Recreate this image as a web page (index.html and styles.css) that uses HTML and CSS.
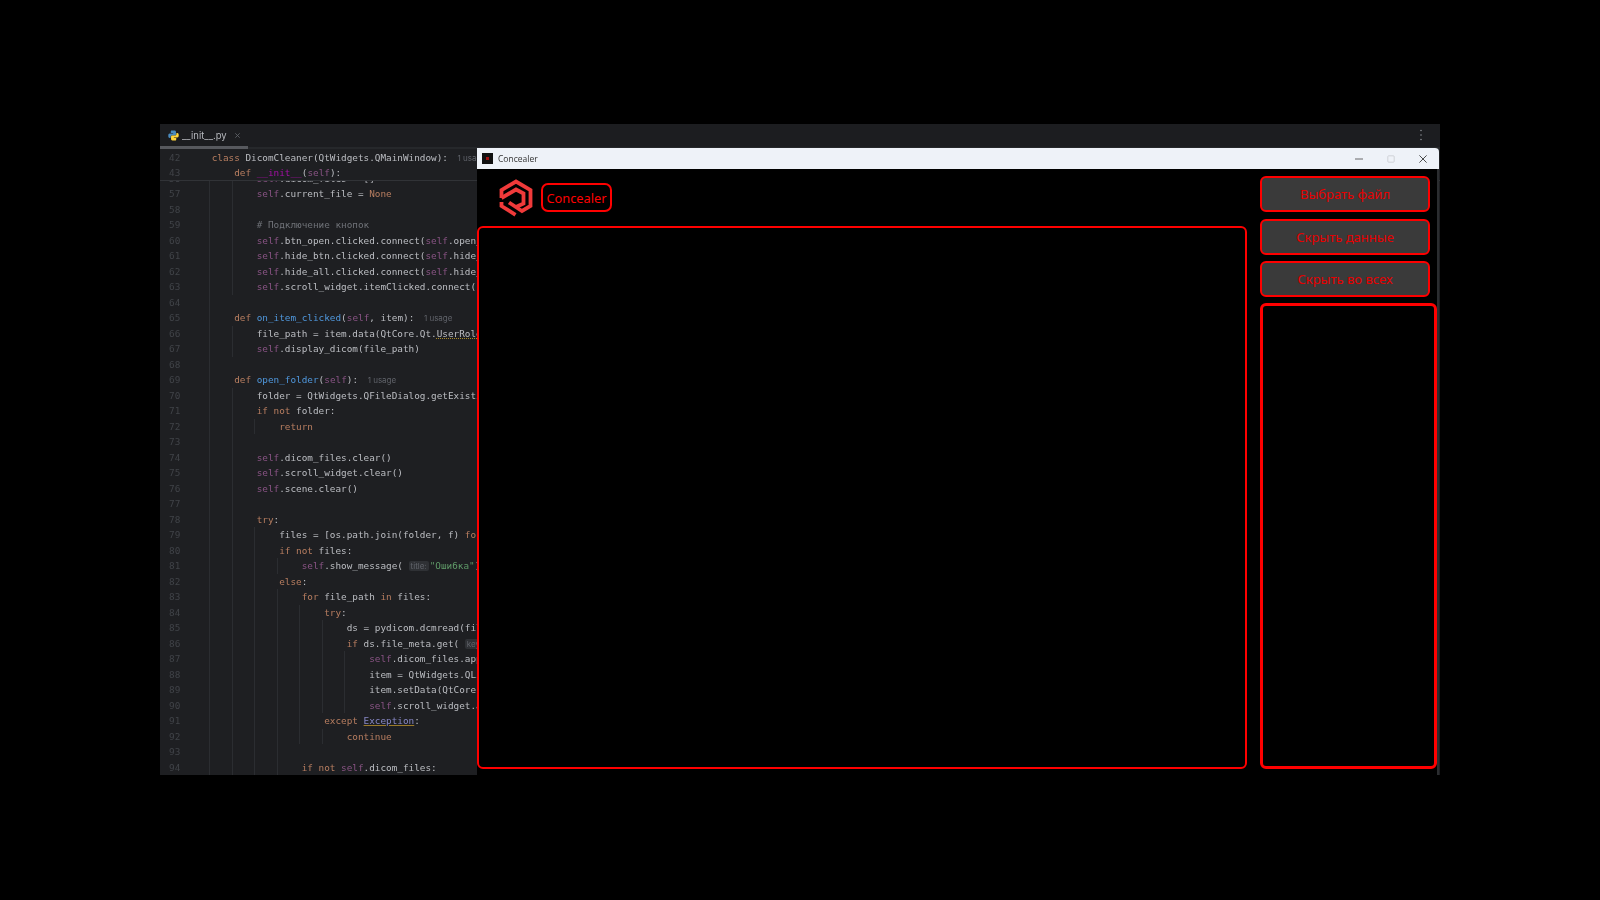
FILE: index.html
```html
<!DOCTYPE html>
<html lang="ru">
<head>
<meta charset="utf-8">
<title>Concealer</title>
<link rel="stylesheet" href="styles.css">
</head>
<body>
<div class="desktop">
  <section class="ide">
    <header class="tabbar">
      <div class="tab">
        <svg class="py" viewBox="0 0 12 12"><path fill="#4b8bbe" d="M4 .6h3.2c.9 0 1.500.6 1.500 1.500v2.400c0 .8-.6 1.400-1.400 1.400H4.500c-1 0-1.700.7-1.700 1.700v1H1.800C.9 8.600.3 7.800.3 6.200s.6-2.400 1.500-2.400h3.800v-.5H3V2C3 1.100 3.300.6 4 .6z"/><path fill="#ffd43b" d="M8 11.400H4.800c-.9 0-1.500-.6-1.500-1.500V7.500c0-.8.6-1.400 1.400-1.400h2.800c1 0 1.700-.7 1.700-1.700v-1h1c.9 0 1.500.8 1.500 2.400s-.6 2.400-1.500 2.400H6.400v.5H9V10c0 .9-.3 1.400-1 1.400z"/></svg>
        <span class="tabname">__init__.py</span>
        <svg class="tabx" viewBox="0 0 8 8"><path d="M1.500 1.500l5 5m0-5l-5 5"/></svg>
      </div>
      <svg class="kebab" viewBox="0 0 4 12"><circle cx="2" cy="1.500" r=".8"/><circle cx="2" cy="6" r=".8"/><circle cx="2" cy="10.500" r=".8"/></svg>
    </header>
    <div class="sticky">
      <div class="line"><b>42</b><code><k>class</k> DicomCleaner(QtWidgets.QMainWindow): <u>1 usage</u></code></div>
      <div class="line"><b>43</b><code class="n1"><k>def</k> <d>__init__</d>(<s>self</s>):</code></div>
    </div>
    <div class="codewrap">
      <div class="codescroll">
        <div class="line"><b>56</b><i></i><i></i><code><s>self</s>.dicom_files = []</code></div>
        <div class="line"><b>57</b><i></i><i></i><code><s>self</s>.current_file = <k>None</k></code></div>
        <div class="line"><b>58</b><i></i><i></i></div>
        <div class="line"><b>59</b><i></i><i></i><code><c># Подключение кнопок</c></code></div>
        <div class="line"><b>60</b><i></i><i></i><code><s>self</s>.btn_open.clicked.connect(<s>self</s>.open_folder)</code></div>
        <div class="line"><b>61</b><i></i><i></i><code><s>self</s>.hide_btn.clicked.connect(<s>self</s>.hide_data)</code></div>
        <div class="line"><b>62</b><i></i><i></i><code><s>self</s>.hide_all.clicked.connect(<s>self</s>.hide_all_data)</code></div>
        <div class="line"><b>63</b><i></i><i></i><code><s>self</s>.scroll_widget.itemClicked.connect(<s>self</s>)</code></div>
        <div class="line"><b>64</b><i></i></div>
        <div class="line"><b>65</b><i></i><code><k>def</k> <f>on_item_clicked</f>(<s>self</s>, item): <u>1 usage</u></code></div>
        <div class="line"><b>66</b><i></i><i></i><code>file_path = item.data(QtCore.Qt.<w>UserRole</w>)</code></div>
        <div class="line"><b>67</b><i></i><i></i><code><s>self</s>.display_dicom(file_path)</code></div>
        <div class="line"><b>68</b><i></i></div>
        <div class="line"><b>69</b><i></i><code><k>def</k> <f>open_folder</f>(<s>self</s>): <u>1 usage</u></code></div>
        <div class="line"><b>70</b><i></i><i></i><code>folder = QtWidgets.QFileDialog.getExistingDirectory()</code></div>
        <div class="line"><b>71</b><i></i><i></i><code><k>if not</k> folder:</code></div>
        <div class="line"><b>72</b><i></i><i></i><i></i><code><k>return</k></code></div>
        <div class="line"><b>73</b><i></i><i></i></div>
        <div class="line"><b>74</b><i></i><i></i><code><s>self</s>.dicom_files.clear()</code></div>
        <div class="line"><b>75</b><i></i><i></i><code><s>self</s>.scroll_widget.clear()</code></div>
        <div class="line"><b>76</b><i></i><i></i><code><s>self</s>.scene.clear()</code></div>
        <div class="line"><b>77</b><i></i><i></i></div>
        <div class="line"><b>78</b><i></i><i></i><code><k>try</k>:</code></div>
        <div class="line"><b>79</b><i></i><i></i><i></i><code>files = [os.path.join(folder, f) <k>for</k> f in x]</code></div>
        <div class="line"><b>80</b><i></i><i></i><i></i><code><k>if not</k> files:</code></div>
        <div class="line"><b>81</b><i></i><i></i><i></i><i></i><code><s>self</s>.show_message( <u class="hint">title:</u><g>"Ошибка"</g>)</code></div>
        <div class="line"><b>82</b><i></i><i></i><i></i><code><k>else</k>:</code></div>
        <div class="line"><b>83</b><i></i><i></i><i></i><i></i><code><k>for</k> file_path <k>in</k> files:</code></div>
        <div class="line"><b>84</b><i></i><i></i><i></i><i></i><i></i><code><k>try</k>:</code></div>
        <div class="line"><b>85</b><i></i><i></i><i></i><i></i><i></i><i></i><code>ds = pydicom.dcmread(file_path)</code></div>
        <div class="line"><b>86</b><i></i><i></i><i></i><i></i><i></i><i></i><code><k>if</k> ds.file_meta.get( <u class="hint">key:</u> x)</code></div>
        <div class="line"><b>87</b><i></i><i></i><i></i><i></i><i></i><i></i><i></i><code><s>self</s>.dicom_files.append(x)</code></div>
        <div class="line"><b>88</b><i></i><i></i><i></i><i></i><i></i><i></i><i></i><code>item = QtWidgets.QListWidgetItem()</code></div>
        <div class="line"><b>89</b><i></i><i></i><i></i><i></i><i></i><i></i><i></i><code>item.setData(QtCore.Qt.UserRole)</code></div>
        <div class="line"><b>90</b><i></i><i></i><i></i><i></i><i></i><i></i><i></i><code><s>self</s>.scroll_widget.addItem(item)</code></div>
        <div class="line"><b>91</b><i></i><i></i><i></i><i></i><i></i><code><k>except</k> <e>Exception</e>:</code></div>
        <div class="line"><b>92</b><i></i><i></i><i></i><i></i><i></i><i></i><code><k>continue</k></code></div>
        <div class="line"><b>93</b><i></i><i></i><i></i><i></i></div>
        <div class="line"><b>94</b><i></i><i></i><i></i><i></i><code><k>if not</k> <s>self</s>.dicom_files:</code></div>
      </div>
    </div>
  </section>

  <section class="window">
    <header class="titlebar">
      <span class="appicon"><span class="appdot"></span></span>
      <span class="wintitle">Concealer</span>
      <span class="wincontrols">
        <svg class="wc" viewBox="0 0 10 10"><path d="M0 5h10" stroke="#444"/></svg>
        <svg class="wc" viewBox="0 0 10 10"><rect x="1" y="1" width="8" height="8" rx="1" fill="none" stroke="#c9ccd1"/></svg>
        <svg class="wc" viewBox="0 0 10 10"><path d="M.5.5l9 9m0-9l-9 9" stroke="#333" stroke-width="1.100"/></svg>
      </span>
    </header>
    <div class="winbody">
      <div class="leftcol">
        <div class="brand">
          <svg class="logo" viewBox="0 0 34 38" fill="none" stroke="#f03a3a" stroke-width="3.800" stroke-linejoin="miter">
            <path d="M2.500 19V11L17 2.500L31.500 11V27L23 32L10 23.500"/>
            <path d="M2.500 19L17 10.500L24.500 14.500V24.500L17 28"/>
            <path d="M2.500 23V27L16.500 35.800"/>
          </svg>
          <span class="brandname">Concealer</span>
        </div>
        <div class="viewer"></div>
      </div>
      <div class="rightcol">
        <button class="btn">Выбрать файл</button>
        <button class="btn">Скрыть данные</button>
        <button class="btn">Скрыть во всех</button>
        <div class="filelist"></div>
      </div>
    </div>
  </section>
</div>
</body>
</html>
```
FILE: styles.css
```css
* { box-sizing: border-box; }
html, body { margin: 0; height: 100%; background: #000; overflow: hidden; }
.desktop { position: relative; width: 1600px; height: 900px; padding: 124px 160px 125px; background: #000; }

.ide { height: 651px; background: #1e1f22; display: flex; flex-direction: column; overflow: hidden; }
.tabbar { height: 25px; flex: none; display: flex; align-items: flex-start; justify-content: space-between; background: #1c1d20; border-bottom: 2px solid #26282b; padding-right: 17px; }
.tab { width: 88px; height: 25px; border-bottom: 3px solid #57595e; display: flex; align-items: center; padding: 0 0 0 8px; gap: 3px; }
.py { width: 11px; height: 11px; flex: none; }
.tabname { font: 9.500px "Inter", sans-serif; color: #b4b6bb; filter: blur(.3px); }
.tabx { width: 7px; height: 7px; margin-left: 4px; fill: none; stroke: #5f6267; }
.kebab { width: 4px; height: 12px; margin-top: 5px; fill: #8a8c90; }

.sticky { flex: none; height: 32px; padding-top: .5px; border-bottom: 1px solid #313337; }
.codewrap { flex: 1; overflow: hidden; }
.codescroll { margin-top: -10.350px; }
.line { display: flex; height: 15.500px; font: 9.350px/15.500px "DejaVu Sans Mono", monospace; color: #bcbec3; white-space: pre; filter: blur(.35px); }
.line b { width: 49.300px; flex: none; padding-left: 9px; font-weight: 400; color: #404348; }
.line i { width: 22.500px; flex: none; border-left: 1px solid #2b2d31; }
.line code { font: inherit; padding-left: 2.400px; }
.line code.n1 { padding-left: 24.900px; }
k { color: #b87e60; }
s { color: #8a5485; text-decoration: none; }
f { color: #4f97dc; }
d { color: #a510a5; }
c { color: #6f7278; }
g { color: #5f9a68; }
e { color: #8888c6; text-decoration: underline; text-decoration-color: #9a7a2a; }
w { text-decoration: underline dotted #a88a2a; }
u { font: 8px "Inter", sans-serif; color: #60636a; text-decoration: none; margin-left: 4px; }
u.hint { background: #2f3135; border-radius: 2px; padding: 0 2px; margin-left: 0; margin-right: 1px; }

.window { position: absolute; left: 477px; top: 148px; width: 962px; height: 627px; background: #000; border-right: 2px solid #2b2d30; display: flex; flex-direction: column; }
.titlebar { height: 21px; flex: none; margin-right: -2px; background: #eef2f8; border-top-right-radius: 4px; display: flex; align-items: center; padding-left: 5px; }
.appicon { width: 11px; height: 11px; background: #111; display: flex; align-items: center; justify-content: center; }
.appdot { width: 3px; height: 3px; background: #a01010; }
.wintitle { font: 8.500px "Open Sans", sans-serif; color: #333; margin-left: 5px; filter: blur(.25px); }
.wincontrols { margin-left: auto; display: flex; gap: 24px; padding-right: 12px; }
.wc { width: 8px; height: 8px; }

.winbody { flex: 1; display: flex; gap: 13px; padding-bottom: 6px; }
.leftcol { width: 770px; display: flex; flex-direction: column; }
.brand { height: 57px; flex: none; display: flex; align-items: center; gap: 8px; padding: 0 0 0 22px; }
.logo { width: 34px; height: 38px; flex: none; }
.brandname { width: 71px; height: 29px; border: 2px solid #f00; border-radius: 7px; color: #f00; font: 12.800px/27px "Noto Sans", sans-serif; text-align: center; }
.viewer { flex: 1; border: 2px solid #f00; border-radius: 6px; }

.rightcol { width: 177px; display: flex; flex-direction: column; align-items: flex-start; padding-top: 7px; }
.btn { width: 170px; height: 36px; margin-bottom: 6.500px; background: #3a3a3a; border: 2px solid #f00; border-radius: 6px; color: #e60000; font: 13px "Noto Sans", sans-serif; padding: 0; }
.filelist { flex: 1; width: 177px; margin-top: -1px; border: 3px solid #f00; border-radius: 6px; }
```
